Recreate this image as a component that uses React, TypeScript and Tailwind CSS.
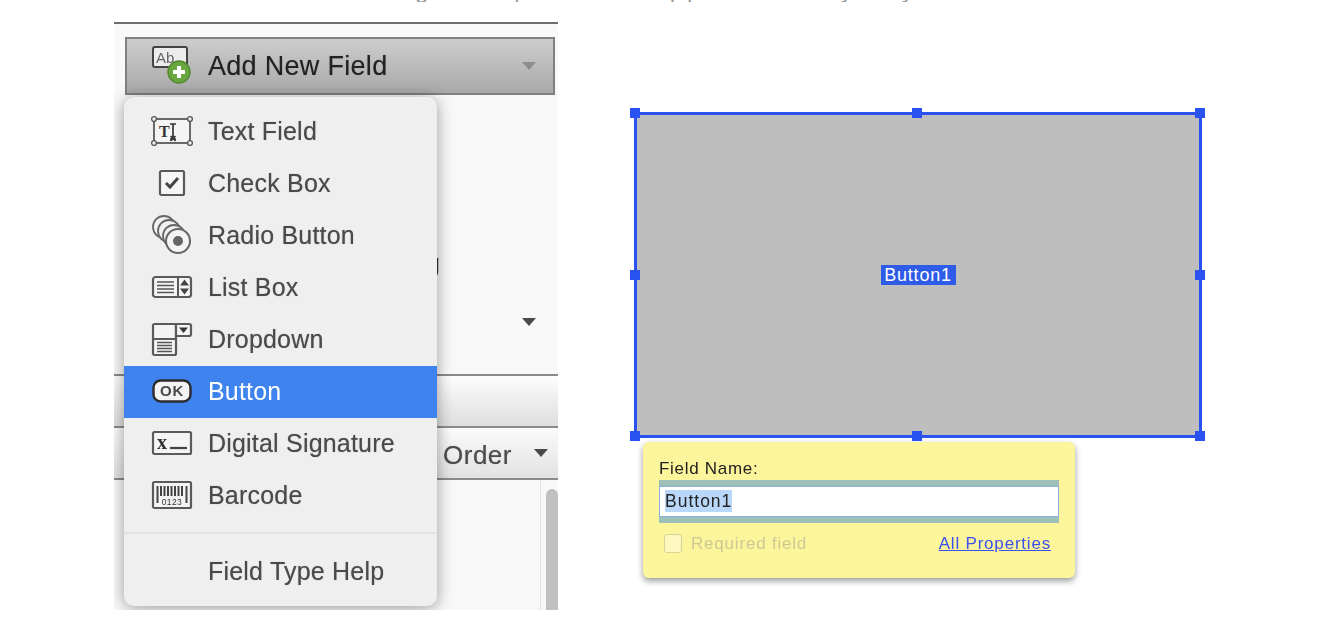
const sans = "font-['Liberation_Sans',Arial,sans-serif]";

function Handle({ className }: { className: string }) {
  return <span className={`absolute w-[10px] h-[10px] bg-[#2a52f0] ${className}`} />;
}

const s = "#5a5a5a";

function IconAdd() {
  return (
    <svg width="42" height="40" viewBox="0 0 42 40" className="shrink-0">
      <rect x="1" y="1" width="34" height="20" rx="2" fill="#ececec" stroke="#444" strokeWidth="2" />
      <text x="4" y="17" fontSize="15" fontFamily="Liberation Sans" fill="#666">Ab</text>
      <circle cx="27" cy="26" r="11" fill="#6aa63f" stroke="#558a33" strokeWidth="1.5" />
      <rect x="21" y="24" width="12" height="4" fill="#fff" />
      <rect x="25" y="20" width="4" height="12" fill="#fff" />
    </svg>
  );
}
function IconTextField() {
  return (
    <svg width="42" height="32" viewBox="0 0 42 32">
      <rect x="3" y="4" width="36" height="24" fill="#f4f4f4" stroke={s} strokeWidth="1.8" />
      {[[3, 4], [39, 4], [3, 28], [39, 28]].map(([x, y]) => (
        <circle key={x * 100 + y} cx={x} cy={y} r="2.4" fill="#efefef" stroke={s} strokeWidth="1.4" />
      ))}
      <text x="8" y="22" fontSize="16" fontWeight="700" fontFamily="Liberation Serif" fill="#333">T</text>
      <path d="M19 9h6M22 9v15M19 24h6M19.500 21l5 5M24.500 21l-5 5" stroke="#333" strokeWidth="1.7" fill="none" />
    </svg>
  );
}
function IconCheck() {
  return (
    <svg width="28" height="28" viewBox="0 0 28 28">
      <rect x="2" y="2" width="24" height="24" rx="1.500" fill="#f6f6f6" stroke={s} strokeWidth="2.2" />
      <path d="M8 14l4 4 8-9" fill="none" stroke="#444" strokeWidth="3" />
    </svg>
  );
}
function IconRadio() {
  return (
    <svg width="42" height="40" viewBox="0 0 42 40">
      {[[13, 12], [18, 16], [23, 21]].map(([x, y]) => (
        <circle key={x} cx={x} cy={y} r="11" fill="#f2f2f2" stroke="#666" strokeWidth="1.8" />
      ))}
      <circle cx="27" cy="26" r="12" fill="#f4f4f4" stroke="#666" strokeWidth="2" />
      <circle cx="27" cy="26" r="5" fill="#666" />
    </svg>
  );
}
function IconList() {
  return (
    <svg width="42" height="24" viewBox="0 0 42 24">
      <rect x="2" y="2" width="38" height="20" rx="2.500" fill="#f4f4f4" stroke={s} strokeWidth="2.2" />
      <path d="M27 2v20" stroke={s} strokeWidth="2" />
      <path d="M6 7h17M6 10.500h17M6 14h17M6 17.500h17" stroke="#555" strokeWidth="1.6" />
      <path d="M33.500 4.500l4.500 6h-9zM33.500 19.500l4.500-6h-9z" fill="#444" />
    </svg>
  );
}
function IconDropdown() {
  return (
    <svg width="42" height="35" viewBox="0 0 42 35">
      <rect x="2" y="2" width="23" height="31" rx="1.500" fill="#f4f4f4" stroke={s} strokeWidth="2.2" />
      <path d="M25 2h13a2 2 0 0 1 2 2v8a2 2 0 0 1-2 2H25z" fill="#f4f4f4" stroke={s} strokeWidth="2.2" />
      <path d="M2 17h23" stroke={s} strokeWidth="2" />
      <path d="M6 20.500h15M6 23.500h15M6 26.500h15M6 29.500h15" stroke="#555" strokeWidth="1.6" />
      <path d="M28 5.500h9l-4.500 5.500z" fill="#333" />
    </svg>
  );
}
function IconOk() {
  return (
    <svg width="40" height="24" viewBox="0 0 40 24">
      <rect x="1.500" y="1.500" width="37" height="21" rx="7" fill="#f4f4f4" stroke="#2c2c2c" strokeWidth="2.4" />
      <text x="20" y="17" textAnchor="middle" fontSize="15" fontWeight="700" letterSpacing="0.8" fontFamily="Liberation Sans" fill="#4a4a4a">OK</text>
    </svg>
  );
}
function IconSign() {
  return (
    <svg width="42" height="26" viewBox="0 0 42 26">
      <rect x="2" y="2" width="38" height="22" rx="1.500" fill="#f4f4f4" stroke={s} strokeWidth="2.2" />
      <text x="6" y="19" fontSize="20" fontWeight="700" fontFamily="Liberation Serif" fill="#333">x</text>
      <path d="M19 18h17" stroke="#444" strokeWidth="2.2" />
    </svg>
  );
}
function IconBarcode() {
  return (
    <svg width="42" height="30" viewBox="0 0 42 30">
      <rect x="2" y="2" width="38" height="26" rx="1.500" fill="#f4f4f4" stroke={s} strokeWidth="2.2" />
      <path d="M6.500 6v17M35.500 6v17M10 6v10M13.500 6v10M17 6v10M20.500 6v10M24 6v10M27.500 6v10M31 6v10" stroke="#444" strokeWidth="2" />
      <text x="21" y="24.500" textAnchor="middle" fontSize="8.500" letterSpacing="0.4" fontFamily="Liberation Sans" fill="#333">0123</text>
    </svg>
  );
}

const items: { label: string; icon: React.ReactNode; active?: boolean }[] = [
  { label: "Text Field", icon: <IconTextField /> },
  { label: "Check Box", icon: <IconCheck /> },
  { label: "Radio Button", icon: <IconRadio /> },
  { label: "List Box", icon: <IconList /> },
  { label: "Dropdown", icon: <IconDropdown /> },
  { label: "Button", icon: <IconOk />, active: true },
  { label: "Digital Signature", icon: <IconSign /> },
  { label: "Barcode", icon: <IconBarcode /> },
];

const thick = "[text-shadow:0_0_1px_rgba(40,40,40,0.45)]";

function Menu() {
  return (
    <div className="absolute left-[10px] top-[73px] w-[313px] h-[509px] rounded-[10px] bg-[#efefef] pt-[9px] shadow-[0_2px_16px_rgba(0,0,0,0.38)] overflow-hidden">
      {items.map((it) => (
        <div
          key={it.label}
          className={`flex items-center h-[52px] ${it.active ? "bg-[#3f83ee] text-[#fff]" : "text-[#4a4a4a]"}`}
        >
          <span className="flex w-[84px] shrink-0 items-center justify-center pl-[12px] pb-[2px]">{it.icon}</span>
          <span className={`pb-[2px] text-[25px] tracking-[0.2px] leading-none ${it.active ? "" : thick}`}>{it.label}</span>
        </div>
      ))}
      <div className="mt-[10px] h-[2px] bg-[#e3e3e3]" />
      <div className={`flex items-center h-[52px] mt-[11px] pl-[84px] text-[25px] tracking-[0.2px] leading-none text-[#4a4a4a] ${thick}`}>
        Field Type Help
      </div>
    </div>
  );
}

function LeftPanel() {
  return (
    <section className="relative mt-[20px] w-[444px] h-[588px] border-t-[2px] border-[#6d6d6d] bg-[#f9f9f9] overflow-hidden shrink-0">
      <div className="pl-[11px] pt-[13px] pr-[3px]">
        <div className="flex items-center h-[58px] border-[2px] border-[#808080] bg-gradient-to-b from-[#cdcdcd] to-[#a9a9a9] pl-[25px] pr-[17px]">
          <IconAdd />
          <span className={`ml-[14px] text-[27px] tracking-[0.3px] leading-none text-[#222] ${thick}`}>Add New Field</span>
          <span className="ml-auto w-0 h-0 border-x-[7px] border-x-transparent border-t-[8px] border-t-[#8d8d8d]" />
        </div>
      </div>
      <div className="relative h-[281px] bg-[#f8f8f8] border-b-[2px] border-[#8a8a8a]">
        <span className="absolute left-[312px] top-[156px] text-[25px] leading-none text-[#333]">g</span>
        <span className="absolute left-[408px] top-[223px] w-0 h-0 border-x-[7px] border-x-transparent border-t-[8px] border-t-[#4a4a4a]" />
      </div>
      <div className="h-[52px] border-b-[2px] border-[#8a8a8a] bg-gradient-to-b from-[#fdfdfd] to-[#dedede]" />
      <div className="flex items-center justify-end h-[52px] border-b-[2px] border-[#8a8a8a] bg-gradient-to-b from-[#fbfbfb] to-[#e2e2e2] pr-[10px]">
        <span className={`pt-[3px] text-[26px] tracking-[0.5px] leading-none text-[#4c4c4c] mr-[22px] ${thick}`}>Order</span>
        <span className="w-0 h-0 border-x-[7px] border-x-transparent border-t-[8px] border-t-[#4a4a4a]" />
      </div>
      <div className="flex justify-end h-[130px] bg-[#f8f8f8]">
        <div className="w-[18px] border-l-[1px] border-[#e2e2e2] pt-[9px] pl-[5px]">
          <div className="h-full rounded-t-[6px] bg-[#c0c0c0]" />
        </div>
      </div>
      <Menu />
    </section>
  );
}

function RightPanel() {
  return (
    <section className="ml-[76px] mt-[110px] w-[568px] shrink-0">
      <div className="relative flex h-[326px] items-center justify-center border-[3px] border-[#2a52f0] bg-[#bebebe]">
        <span className="h-[20px] w-[75px] bg-[#2e5be8] text-center text-[18px] tracking-[0.8px] leading-[20px] text-[#fff]">Button1</span>
        <Handle className="-left-[7px] -top-[7px]" />
        <Handle className="left-[275px] -top-[7px]" />
        <Handle className="-right-[6px] -top-[7px]" />
        <Handle className="-left-[7px] top-[155px]" />
        <Handle className="-right-[6px] top-[155px]" />
        <Handle className="-left-[7px] -bottom-[6px]" />
        <Handle className="left-[275px] -bottom-[6px]" />
        <Handle className="-right-[6px] -bottom-[6px]" />
      </div>
      <div className="ml-[9px] mt-[4px] w-[432px] h-[136px] rounded-[6px] bg-[#fdf59b] px-[16px] pt-[18px] shadow-[0_3px_6px_rgba(0,0,0,0.4)]">
        <div className="text-[17px] tracking-[0.7px] leading-[18px] text-[#222]">Field Name:</div>
        <div className="mt-[2px] h-[43px] border-y-[6px] border-[#9fc0b8]">
          <div className="flex h-[31px] items-center border border-[#8ab0e0] bg-[#fff] pl-[5px] pb-[1px]">
            <span className="bg-[#b9d7f8] text-[17.500px] leading-[22px] tracking-[1px] text-[#222]">Button1</span>
          </div>
        </div>
        <div className="mt-[11px] flex items-center justify-between pl-[5px] pr-[8px]">
          <div className="flex items-center gap-[9px]">
            <span className="h-[19px] w-[18px] rounded-[3px] border border-[#d8d294] bg-[#fdf8c0]" />
            <span className="text-[17px] leading-[19px] tracking-[0.8px] text-[#cdc894]">Required field</span>
          </div>
          <a className="text-[17px] leading-[19px] tracking-[0.8px] text-[#3a50f0] underline">All Properties</a>
        </div>
      </div>
    </section>
  );
}

function ClippedCaption() {
  return (
    <div className="h-[2px] overflow-hidden">
      <div className="-mt-[22px] flex h-[24px] pl-[415px] text-[24px] leading-none text-[#999]">
        <span>g</span>
        <span className="ml-[86px]">p</span>
        <span className="ml-[142px]">p</span>
        <span className="ml-[4px]">p</span>
        <span className="ml-[140px]">y</span>
        <span className="ml-[49px]">y</span>
      </div>
    </div>
  );
}

export default function App() {
  return (
    <div className={`${sans} h-[634px] w-[1322px] overflow-hidden bg-[#fff]`}>
      <ClippedCaption />
      <div className="flex pl-[114px] blur-[0.6px]">
        <LeftPanel />
        <RightPanel />
      </div>
    </div>
  );
}
